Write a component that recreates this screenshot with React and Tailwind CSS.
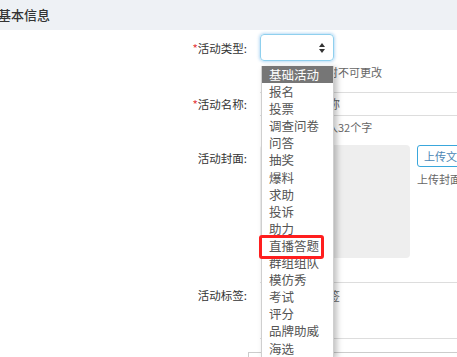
const items = [
  "基础活动", "报名", "投票", "调查问卷", "问答", "抽奖", "爆料", "求助", "投诉",
  "助力", "直播答题", "群组组队", "模仿秀", "考试", "评分", "品牌助威", "海选",
];

function Label({ children, required }) {
  return (
    <div className="w-[247px] shrink-0 text-right text-[11.5px] leading-[14px] text-[#333]">
      {required && <span className="text-[#e4393c]">*</span>}
      {children}
    </div>
  );
}

export default function App() {
  return (
    <div
      className="relative w-[457px] h-[357px] overflow-hidden bg-white"
      style={{ fontFamily: '"Noto Sans CJK SC", "Noto Sans", sans-serif' }}
    >
      {/* header */}
      <div className="h-[30px] bg-[#eef1f5] flex items-center">
        <span className="-ml-[2px] text-[13px] font-medium text-[#333]">基本信息</span>
      </div>

      {/* type */}
      <div className="flex items-center mt-[4px]">
        <Label required>活动类型:</Label>
        <div className="ml-[13px] w-[74px] h-[27px] shrink-0 rounded-[4px] border border-[#8fd0ee] shadow-[0_0_3px_1px_rgba(102,175,233,0.45)] flex items-center justify-end pr-[8px]">
          <svg width="6" height="10" viewBox="0 0 6 10">
            <path d="M3 0 L6 4 H0 Z M3 10 L6 6 H0 Z" fill="#333" />
          </svg>
        </div>
      </div>
      <div className="ml-[261px] mt-[4px] h-[14px] text-[11px] leading-[14px] text-[#666] whitespace-nowrap">
        活动类型保存时不可更改
      </div>

      {/* name */}
      <div className="flex items-center mt-[13px]">
        <Label required>活动名称:</Label>
        <div className="ml-[13px] w-[220px] h-[24px] shrink-0 border-y border-[#ddd] flex items-center pl-[8px] text-[12px] text-[#666] whitespace-nowrap">
          输入活动名称
        </div>
      </div>
      <div className="ml-[261px] mt-[4px] h-[14px] text-[11px] leading-[14px] text-[#666] whitespace-nowrap">
        名称最多可输入32个字
      </div>

      {/* cover */}
      <div className="flex mt-[11px]">
        <div className="pt-[6px]">
          <Label>活动封面:</Label>
        </div>
        <div className="ml-[13px] w-[150px] h-[113px] shrink-0 rounded-[4px] bg-[#eeeeee]" />
        <div className="ml-[7px] flex flex-col shrink-0">
          <div className="w-[60px] h-[22px] rounded-[3px] border border-[#3aa7dc] flex items-center pl-[6px] text-[11px] text-[#4b86b4] whitespace-nowrap">
            上传文件
          </div>
          <div className="mt-[5px] text-[11px] leading-[14px] text-[#666] whitespace-nowrap">上传封面，</div>
        </div>
      </div>

      {/* tags */}
      <div className="flex mt-[24px]">
        <div className="pt-[6px]">
          <Label>活动标签:</Label>
        </div>
        <div className="ml-[13px] w-[220px] h-[57px] shrink-0 border-y border-[#ddd] pl-[8px] pt-[5px] text-[12px] leading-[16px] text-[#666] whitespace-nowrap">
          输入活动标签
        </div>
      </div>

      {/* bottom box */}
      <div className="ml-[248px] mt-[13px] h-[20px] border-t border-l border-[#ccc]" />

      {/* dropdown */}
      <div className="absolute left-[261px] top-[66px] w-[73px] bg-white border-x border-[#cfcfcf] shadow-[3px_2px_6px_rgba(0,0,0,0.25)]">
        {items.map((it, i) => (
          <div
            key={it}
            className={`h-[17.1px] pl-[7px] text-[12.5px] leading-[17px] whitespace-nowrap ${
              i === 0 ? "bg-[#767676] text-white" : "text-[#555]"
            }`}
          >
            {it}
          </div>
        ))}
      </div>

      {/* highlight box */}
      <div className="absolute left-[259px] top-[235px] w-[65px] h-[24px] border-[3px] border-[#ff1e1e] rounded-[3px]" />
    </div>
  );
}
